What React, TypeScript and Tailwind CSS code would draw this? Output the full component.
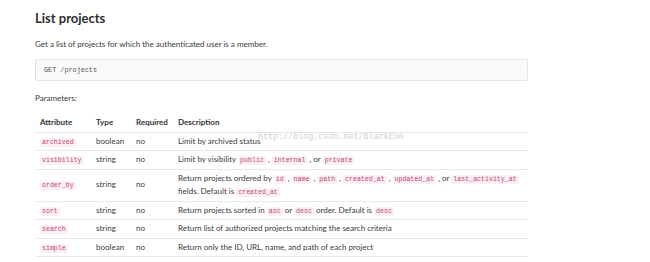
import React from "react";

type Row = {
    name: string,
    type: string,
    required: string,
    desc: React.ReactNode,
};

const Code = ({children}: {children: React.ReactNode}) => (
    <code className="font-['Liberation_Mono',monospace] text-[6.6px] leading-none text-[#c7416e] bg-[#fbf0f4] rounded-[2px] px-[2px] py-[1px]">
        {children}
    </code>
);

const rows: Row[] = [
    {name: "archived", type: "boolean", required: "no", desc: <>Limit by archived status</>},
    {
        name: "visibility", type: "string", required: "no",
        desc: <>Limit by visibility <Code>public</Code> , <Code>internal</Code> , or <Code>private</Code></>,
    },
    {
        name: "order_by", type: "string", required: "no",
        desc: <>Return projects ordered by <Code>id</Code> , <Code>name</Code> , <Code>path</Code> , <Code>created_at</Code> , <Code>updated_at</Code> , or <Code>last_activity_at</Code><br/>fields. Default is <Code>created_at</Code></>,
    },
    {
        name: "sort", type: "string", required: "no",
        desc: <>Return projects sorted in <Code>asc</Code> or <Code>desc</Code> order. Default is <Code>desc</Code></>,
    },
    {name: "search", type: "string", required: "no", desc: <>Return list of authorized projects matching the search criteria</>},
    {name: "simple", type: "boolean", required: "no", desc: <>Return only the ID, URL, name, and path of each project</>},
];

export default function App() {
    return (
        <div className="w-[650px] h-[262px] bg-white overflow-hidden font-['Lato',sans-serif] text-[#3a3a3a]">
            <div className="relative ml-[35px] w-[493px] pt-[9px]">
                {/* HEADER */}
                <h2 className="text-[13px] font-bold leading-[18px] text-[#2e2e2e]">List projects</h2>
                <p className="mt-[11px] text-[8px] leading-[12px]">
                    Get a list of projects for which the authenticated user is a member.
                </p>
                <pre className="mt-[9px] h-[22px] flex items-center px-[8px] bg-[#fafafa] border border-[#e5e5e5] border-l-[#dcdcdc] rounded-[2px] font-['Liberation_Mono',monospace] text-[6.8px] text-[#555]">GET /projects</pre>
                <p className="mt-[11px] text-[8px] leading-[12px]">Parameters:</p>

                {/* TABLE */}
                <table className="mt-[9px] w-full border-collapse text-[8px] leading-[13.5px]">
                    <thead>
                        <tr className="border-b border-[#e8e8e8] font-bold text-[#333]">
                            <th className="w-[61px] pl-[5px] pt-[3px] pb-[2px] text-left font-bold">Attribute</th>
                            <th className="w-[40px] pt-[3px] pb-[2px] text-left font-bold">Type</th>
                            <th className="w-[42px] pt-[3px] pb-[2px] text-left font-bold">Required</th>
                            <th className="pt-[3px] pb-[2px] text-left font-bold">Description</th>
                        </tr>
                    </thead>
                    <tbody>
                        {rows.map((r) => (
                            <tr key={r.name} className="border-b border-[#e8e8e8]">
                                <td className="pl-[5px] py-[2px] align-middle"><Code>{r.name}</Code></td>
                                <td className="py-[2px] align-middle">{r.type}</td>
                                <td className="py-[2px] align-middle">{r.required}</td>
                                <td className="py-[2px] align-middle whitespace-nowrap">{r.desc}</td>
                            </tr>
                        ))}
                    </tbody>
                </table>

                {/* WATERMARK */}
                <div className="absolute left-[223px] top-[131px] font-['Liberation_Mono',monospace] text-[8.4px] text-[#cfcfcf] pointer-events-none">
                    http://blog.csdn.net/BlackEnn
                </div>
            </div>
        </div>
    );
}
